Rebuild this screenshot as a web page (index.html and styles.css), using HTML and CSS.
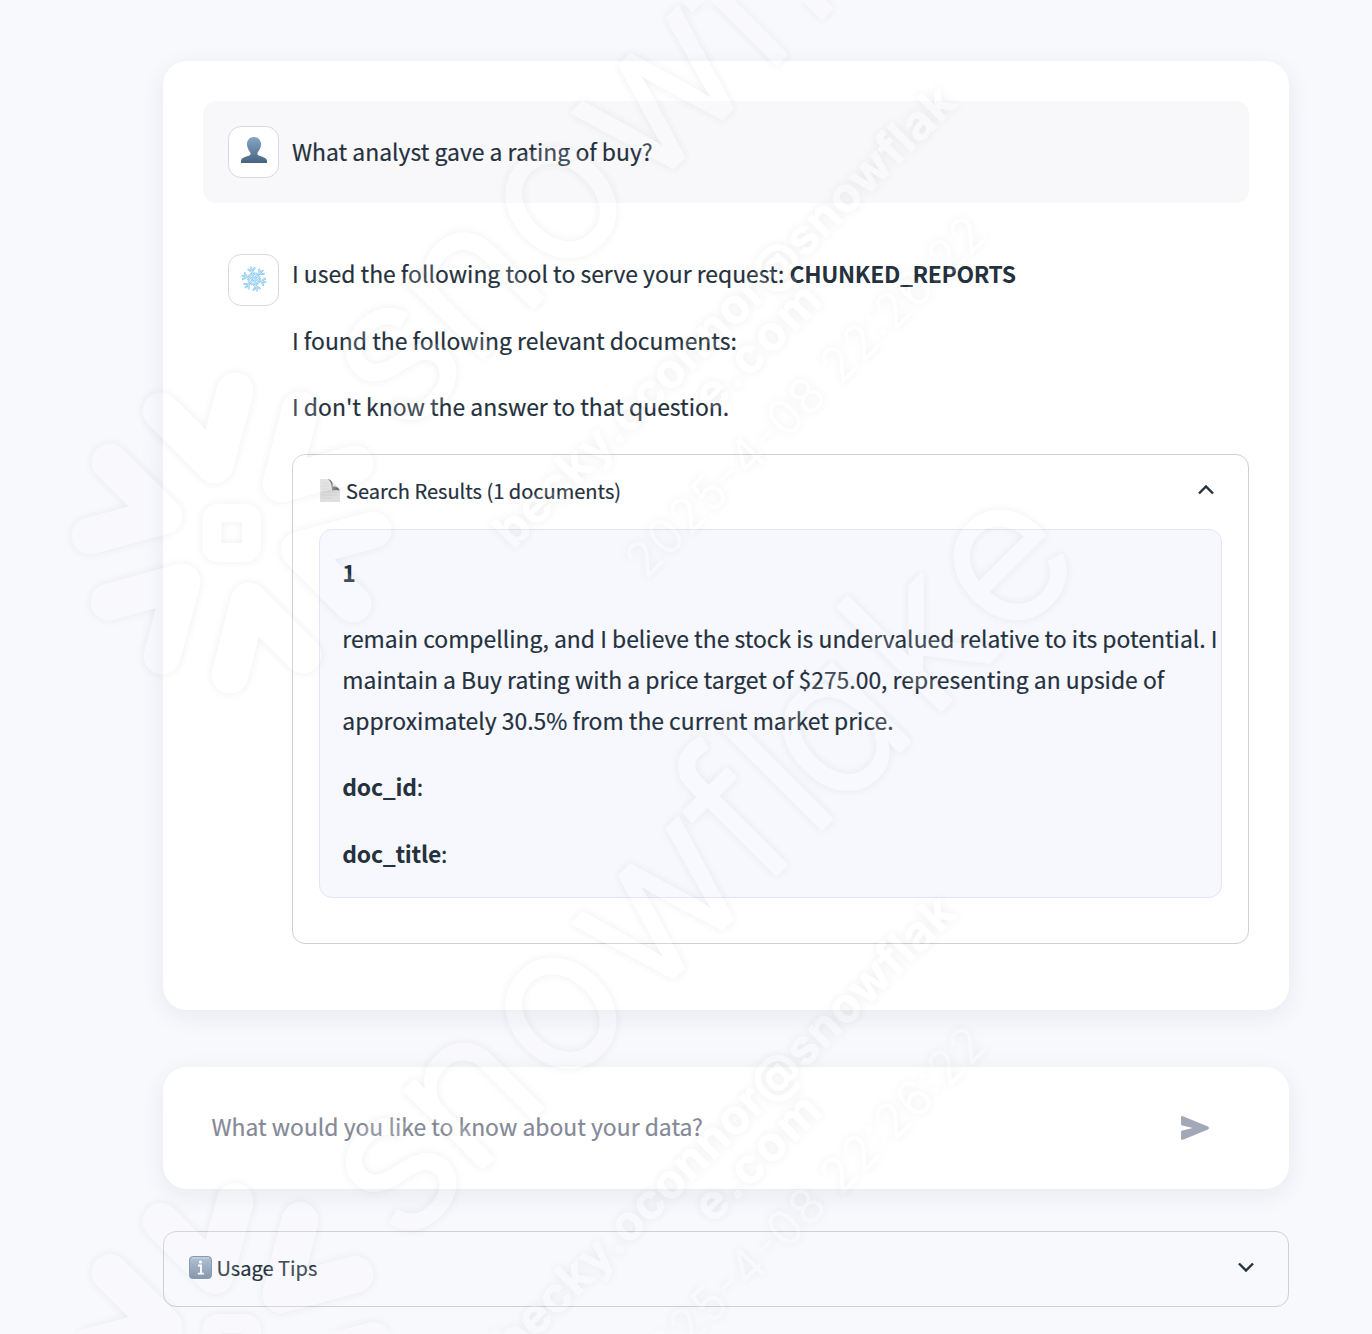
FILE: index.html
```html
<!DOCTYPE html>
<html lang="en">
<head>
<meta charset="utf-8">
<title>Data assistant</title>
<link rel="stylesheet" href="styles.css">
</head>
<body>
<main class="page">
  <section class="card chat">
    <div class="message message-user">
      <div class="avatar">
        <svg width="26" height="26" viewBox="0 0 26 26">
          <defs><linearGradient id="bust" x1="0" y1="0" x2="0" y2="1"><stop offset="0" stop-color="#86a5c4"/><stop offset="1" stop-color="#486382"/></linearGradient></defs>
          <path fill="url(#bust)" d="M13 0C17 0 20 2.800 20 7C20 9 19.500 11 18.500 12.700C17.700 14 16.400 15.200 16.300 17C16.500 19.500 24.800 19.200 26 23.500V26H0V23.500C1.200 19.200 9.500 19.500 9.700 17C9.600 15.200 8.300 14 7.500 12.700C6.500 11 6 9 6 7C6 2.800 9 0 13 0Z"/>
        </svg>
      </div>
      <p>What analyst gave a rating of buy?</p>
    </div>
    <div class="message">
      <div class="avatar avatar-bot">
        <svg width="26" height="26" viewBox="-13 -13 26 26" fill="none" stroke-linecap="round" stroke-linejoin="round">
          <defs>
            <g id="arm"><path d="M0 0V-12M-3.200 -10.500L0 -7.500L3.200 -10.500M-2 -5.500L0 -3.800L2 -5.500"/></g>
            <g id="flake"><use href="#arm"/><use href="#arm" transform="rotate(60)"/><use href="#arm" transform="rotate(120)"/><use href="#arm" transform="rotate(180)"/><use href="#arm" transform="rotate(240)"/><use href="#arm" transform="rotate(300)"/></g>
          </defs>
          <g transform="rotate(-14)"><use href="#flake" stroke="#7fc0ea" stroke-width="1.900"/><use href="#flake" stroke="#c9ebff" stroke-width=".8"/></g>
        </svg>
      </div>
      <div class="reply">
        <p>I used the following tool to serve your request: <strong class="tool">CHUNKED_REPORTS</strong></p>
        <p>I found the following relevant documents:</p>
        <p>I don't know the answer to that question.</p>
        <section class="expander results">
          <header class="expander-head">
            <svg width="20" height="23" viewBox="0 0 20 23">
              <defs><linearGradient id="fold" x1="0" y1="1" x2="1" y2="0"><stop offset="0" stop-color="#b5b5b5"/><stop offset=".6" stop-color="#555"/><stop offset="1" stop-color="#888"/></linearGradient></defs>
              <path fill="#dfdfdf" d="M0 0H9L20 10V23H0Z"/>
              <path stroke="#d2d2d2" stroke-width="1" d="M2 4H8M2 7H9M2 10H9M2 13H17M2 16H17M2 19H12"/>
              <path fill="url(#fold)" d="M8 0C12 1 13 4 12.500 7.500C16 7 18.500 8 19.500 11.500C17 10.500 15 11 12 11.500C11.500 7 11.500 3 8 0Z"/>
            </svg>
            <span>Search Results (1 documents)</span>
            <svg class="chevron" width="18" height="14" viewBox="0 0 18 14"><path d="M2 9.500L9 2.500L16 9.500"/></svg>
          </header>
          <div class="result">
            <p><strong>1</strong></p>
            <p>remain compelling, and I believe the stock is undervalued relative to its potential. I<br>maintain a Buy rating with a price target of $275.00, representing an upside of<br>approximately 30.5% from the current market price.</p>
            <p><strong>doc_id</strong>:</p>
            <p><strong>doc_title</strong>:</p>
          </div>
        </section>
      </div>
    </div>
  </section>

  <section class="card ask">
    <span>What would you like to know about your data?</span>
    <svg width="30" height="26" viewBox="0 0 30 26"><path fill="#a3a8b8" d="M1 2.500Q1 .6 3 1.200L28 11.500Q30 13 28 14.400L3 24.700Q1 25.300 1 23.400V17Q1 15.800 2.200 15.500L13 13L2.200 10.400Q1 10 1 8.900Z"/></svg>
  </section>

  <section class="expander tips">
    <header class="expander-head">
      <svg width="23" height="23" viewBox="0 0 23 23">
        <defs><linearGradient id="info" x1="0" y1="0" x2="0" y2="1"><stop offset="0" stop-color="#a5b9d2"/><stop offset="1" stop-color="#72869f"/></linearGradient></defs>
        <rect x=".5" y=".5" width="22" height="22" rx="3.500" fill="url(#info)" stroke="#7589a3"/>
        <path stroke="#c6d3e2" stroke-width="1" d="M3 2H20"/>
        <circle cx="11.500" cy="6" r="1.600" fill="#fff"/>
        <path fill="none" stroke="#fff" stroke-width="1.800" d="M9 9.500H12V17.500M8.800 17.700H14.800"/>
      </svg>
      <span>Usage Tips</span>
      <svg class="chevron" width="18" height="14" viewBox="0 0 18 14"><path d="M2 2.500L9 9.500L16 2.500"/></svg>
    </header>
  </section>
</main>

<svg class="watermark" width="1372" height="1334" viewBox="0 0 1372 1334" aria-hidden="true">
  <defs>
    <g id="tile">
      <g class="mark">
        <path d="M161 411L215 465L235 391"/>
        <path d="M300 410L281 484L355 464"/>
        <path d="M373 530L299 550L353 604"/>
        <path d="M303 655L249 601L230 675"/>
        <path d="M162 656L182 582L109 602"/>
        <path d="M90 536L164 516L110 462"/>
        <rect class="core" x="212" y="513" width="39.500" height="39.500" rx="6"/>
      </g>
      <g transform="rotate(-45)">
        <text class="word" y="594" x="-26 72 194 318 481 552 588 720 828">snowflake</text>
        <text class="owner" x="-26" y="752" textLength="630">becky.oconnor@snowflak</text>
        <text class="owner" x="211" y="797" textLength="158">e.com</text>
        <text class="stamp" x="46" y="867" textLength="487">2025-4-08 22:26:22</text>
      </g>
    </g>
  </defs>
  <use href="#tile"/>
  <use href="#tile" y="810.500"/>
</svg>
</body>
</html>
```
FILE: styles.css
```css
* { box-sizing: border-box; }

body {
  position: relative;
  margin: 0;
  height: 1334px;
  overflow: hidden;
  background: #f8f9fd;
  color: #25313d;
  font: 22.91px/41px "Noto Sans CJK SC", "Noto Sans", sans-serif;
  -webkit-text-stroke: .2px;
}

p { margin: 0; white-space: nowrap; }
strong { font-weight: 700; letter-spacing: -.25px; -webkit-text-stroke: 0; }
svg { display: block; flex: none; }

.tool { letter-spacing: -.35px; }

.page {
  display: flex;
  flex-direction: column;
  width: 1126px;
  margin-left: 163px;
  padding-top: 61px;
}

.card {
  background: #fff;
  border-radius: 24px;
  box-shadow: 0 6px 26px rgba(30, 35, 60, .07);
}

.chat {
  display: flex;
  flex-direction: column;
  gap: 26px;
  height: 949px;
  padding: 40px;
}

.message {
  display: flex;
  gap: 13px;
  padding: 25px 0 0 25px;
}

.message-user {
  height: 102px;
  align-items: flex-start;
  background: #f8f8fb;
  border-radius: 13px;
}

.message-user p { padding-top: 5px; }

.avatar {
  display: flex;
  flex: none;
  justify-content: center;
  width: 51px;
  height: 52px;
  padding-top: 10px;
  background: #fff;
  border: 1px solid #d5d9e7;
  border-radius: 13px;
}

.avatar-bot { padding-top: 11px; }

.reply {
  display: flex;
  flex: 1;
  flex-direction: column;
  gap: 25.5px;
  margin-top: -1px;
}

.expander {
  border: 1px solid #cfd0d4;
  border-radius: 13px;
}

.results {
  height: 490px;
  margin-top: 1px;
  padding: 0 26px;
}

.expander-head {
  display: flex;
  align-items: center;
  gap: 6px;
  height: 74px;
  padding-bottom: 2px;
  font-size: 20.05px;
}

.chevron {
  margin-left: auto;
  fill: none;
  stroke: #25313d;
  stroke-width: 2.4;
}

.results .expander-head { padding-left: 1px; }
.results .chevron { margin-right: 7px; }

.result {
  display: flex;
  flex-direction: column;
  gap: 25.4px;
  height: 369px;
  padding: 22px 0 0 22.3px;
  background: #f6f8fe;
  border: 1px solid #e2e5fa;
  border-radius: 13px;
}

.ask {
  display: flex;
  align-items: center;
  justify-content: space-between;
  height: 122px;
  margin-top: 57px;
  padding: 0 79px 0 48.4px;
  color: #858997;
}

.ask span { padding-bottom: 3px; }

.tips {
  height: 76px;
  margin-top: 42px;
  padding: 0 33px 0 25px;
}

.tips .expander-head { padding-bottom: 3px; gap: 4.5px; }

.watermark {
  position: absolute;
  inset: 0;
  z-index: 2;
  pointer-events: none;
  opacity: .14;
  filter: drop-shadow(0 0 5px rgba(0, 0, 0, .45));
  -webkit-text-stroke: 0;
}

.mark {
  fill: none;
  stroke: #fff;
  stroke-width: 37;
  stroke-linecap: round;
  stroke-linejoin: round;
}

.core { stroke-width: 19; }

.watermark text {
  fill: #fff;
  stroke: #fff;
  stroke-linejoin: round;
  font-family: Inter, sans-serif;
}

.watermark .word {
  font-size: 200px;
  font-weight: 300;
  font-feature-settings: "cv11";
  stroke-width: 4;
}

.owner { font-size: 48px; font-weight: 700; stroke-width: .6; }
.stamp { font-size: 48px; font-weight: 300; stroke-width: .6; }
```
